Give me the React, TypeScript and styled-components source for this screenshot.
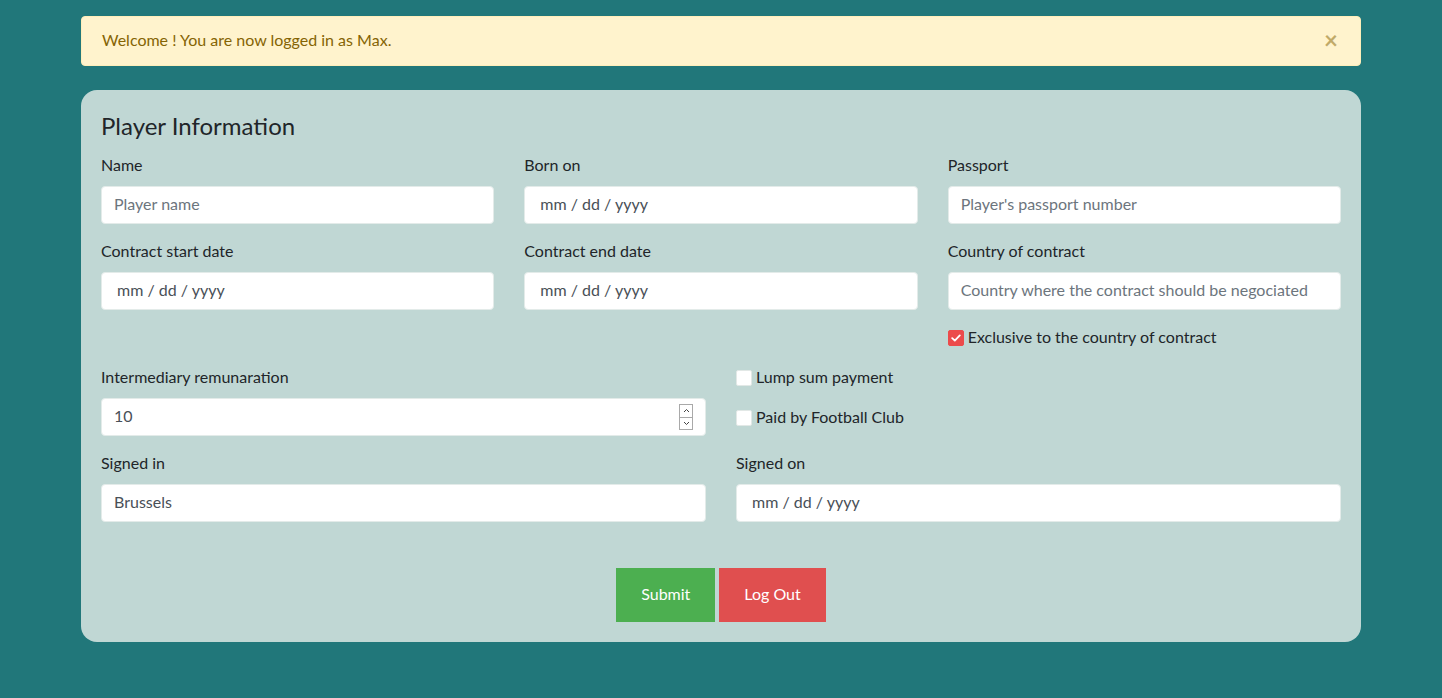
import React from 'react';
import styled, { createGlobalStyle } from 'styled-components';

const GlobalStyle = createGlobalStyle`
	body {
		margin: 0;
		background: #21777a;
		font-family: Lato, "Open Sans", sans-serif;
		color: #212529;
	}
	* { box-sizing: border-box; }
`;

const Page = styled.div`
	width: 1280px;
	margin: 0 auto;
	padding-top: 16px;
`;

const Alert = styled.div`
	display: flex;
	align-items: center;
	justify-content: space-between;
	padding: 11px 20px 13px;
	line-height: 24px;
	font-size: 16px;
	color: #856404;
	background: #fff3cd;
	border: 1px solid #ffeeba;
	border-radius: 4px;
`;

const Close = styled.span`
	font-size: 24px;
	font-weight: 700;
	line-height: 24px;
	color: #856404;
	opacity: 0.5;
	margin-right: 2px;
`;

const Card = styled.form`
	margin-top: 24px;
	padding: 20px;
	background: #c0d7d4;
	border-radius: 16px;
`;

const Title = styled.h2`
	margin: 0 0 9px;
	font-size: 24px;
	font-weight: 400;
	line-height: 32px;
	padding-bottom: 2px;
`;

const Grid = styled.div<{ $cols: number; $top?: number }>`
	display: grid;
	grid-template-columns: repeat(${p => p.$cols}, 1fr);
	column-gap: 30px;
	row-gap: 15px;
	margin-top: ${p => p.$top || 0}px;
`;

const Field = styled.div`
	display: flex;
	flex-direction: column;
`;

const Label = styled.label`
	font-size: 16px;
	line-height: 24px;
	margin-bottom: 9px;
`;

const InputWrap = styled.div`
	position: relative;
	display: flex;
	flex-direction: column;
`;

const Input = styled.input<{ $date?: boolean }>`
	height: 38px;
	padding: 4px ${p => p.$date ? '15px' : '12px'} 8px;
	font: 16px/24px Lato, "Open Sans", sans-serif;
	color: #495057;
	background: #fff;
	border: 1px solid #e3ebe9;
	border-radius: 4px;
	outline: none;
	appearance: textfield;

	&::placeholder { color: #6c757d; }

	&::-webkit-inner-spin-button,
	&::-webkit-outer-spin-button {
		-webkit-appearance: none;
		margin: 0;
	}
`;

const Spinner = styled.div`
	position: absolute;
	right: 13px;
	top: 6px;
	width: 14px;
	height: 26px;
	display: flex;
	flex-direction: column;
	border: 1px solid #a9a9a9;
	background: #fff;
`;

const SpinHalf = styled.div<{ $down?: boolean }>`
	flex: 1;
	display: flex;
	align-items: center;
	justify-content: center;
	border-top: ${p => p.$down ? '1px solid #a9a9a9' : 'none'};
`;

const CheckStack = styled.div`
	display: flex;
	flex-direction: column;
	gap: 16px;
`;

const CheckRow = styled.label`
	display: flex;
	align-items: center;
	gap: 4px;
	font-size: 16px;
	line-height: 24px;
`;

const Box = styled.span<{ $checked?: boolean }>`
	width: 16px;
	height: 16px;
	border-radius: 2px;
	display: flex;
	align-items: center;
	justify-content: center;
	background: ${p => p.$checked ? '#ec4b4b' : '#fff'};
	border: 1px solid ${p => p.$checked ? '#ec4b4b' : '#e2e8e6'};
	margin-top: 2px;
`;

const Actions = styled.div`
	display: flex;
	justify-content: center;
	gap: 4px;
	margin-top: 46px;
`;

const Button = styled.button<{ $color: string }>`
	padding: 14px 25px 16px;
	font: 16px/24px Lato, "Open Sans", sans-serif;
	color: #fff;
	background: ${p => p.$color};
	border: none;
	border-radius: 0;
`;

const Check: React.FC<{ label: string; checked?: boolean }> = ({ label, checked }) => (
	<CheckRow>
		<Box $checked={checked}>
			{checked && (
				<svg width="10" height="8" viewBox="0 0 10 8">
					<path d="M1.2 4.2 L3.8 6.6 L8.8 1.4" stroke="#fff" strokeWidth="1.8" fill="none" strokeLinecap="round" strokeLinejoin="round" />
				</svg>
			)}
		</Box>
		{label}
	</CheckRow>
);

const Chevron: React.FC<{ down?: boolean }> = ({ down }) => (
	<svg width="7" height="5" viewBox="0 0 7 5">
		<path d={down ? 'M1 1 L3.5 3.5 L6 1' : 'M1 4 L3.5 1.5 L6 4'} stroke="#444" strokeWidth="1" fill="none" />
	</svg>
);

const App: React.FC = () => {
	return <>
		<GlobalStyle />
		<Page>
			<Alert>
				<span>Welcome ! You are now logged in as Max.</span>
				<Close>×</Close>
			</Alert>
			<Card onSubmit={e => e.preventDefault()}>
				<Title>Player Information</Title>
				<Grid $cols={3}>
					<Field>
						<Label>Name</Label>
						<Input placeholder="Player name" />
					</Field>
					<Field>
						<Label>Born on</Label>
						<Input $date readOnly value="mm / dd / yyyy" />
					</Field>
					<Field>
						<Label>Passport</Label>
						<Input placeholder="Player's passport number" />
					</Field>
					<Field>
						<Label>Contract start date</Label>
						<Input $date readOnly value="mm / dd / yyyy" />
					</Field>
					<Field>
						<Label>Contract end date</Label>
						<Input $date readOnly value="mm / dd / yyyy" />
					</Field>
					<Field>
						<Label>Country of contract</Label>
						<Input placeholder="Country where the contract should be negociated" />
					</Field>
					<div />
					<div />
					<Check label="Exclusive to the country of contract" checked />
				</Grid>
				<Grid $cols={2} $top={16}>
					<Field>
						<Label>Intermediary remunaration</Label>
						<InputWrap>
							<Input type="number" defaultValue={10} />
							<Spinner>
								<SpinHalf><Chevron /></SpinHalf>
								<SpinHalf $down><Chevron down /></SpinHalf>
							</Spinner>
						</InputWrap>
					</Field>
					<CheckStack>
						<Check label="Lump sum payment" />
						<Check label="Paid by Football Club" />
					</CheckStack>
					<Field>
						<Label>Signed in</Label>
						<Input defaultValue="Brussels" />
					</Field>
					<Field>
						<Label>Signed on</Label>
						<Input $date readOnly value="mm / dd / yyyy" />
					</Field>
				</Grid>
				<Actions>
					<Button type="submit" $color="#4caf50">Submit</Button>
					<Button type="button" $color="#e04f4f">Log Out</Button>
				</Actions>
			</Card>
		</Page>
	</>;
};

export default App;
